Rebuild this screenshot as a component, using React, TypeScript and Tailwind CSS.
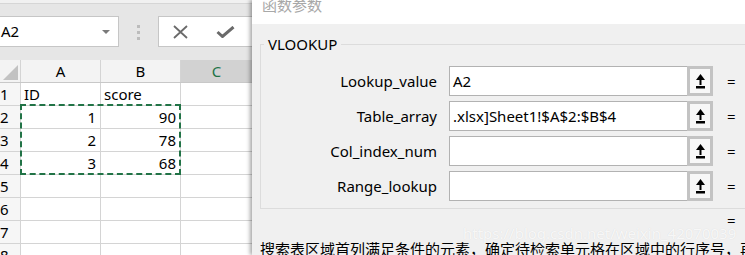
import React from "react";

const rows = [
  ["1", "ID", "score"],
  ["2", "1", "90"],
  ["3", "2", "78"],
  ["4", "3", "68"],
  ["5", "", ""],
  ["6", "", ""],
  ["7", "", ""],
  ["8", "", ""],
];

const args = [
  { label: "Lookup_value", value: "A2" },
  { label: "Table_array", value: ".xlsx]Sheet1!$A$2:$B$4" },
  { label: "Col_index_num", value: "" },
  { label: "Range_lookup", value: "" },
];

function RefButton() {
  return (
    <div className="flex h-[30px] w-[26px] shrink-0 items-center justify-center border-[3px] border-[#c3c3c3] bg-[#f7f7f7]">
      <svg width="9" height="15" viewBox="0 0 9 15">
        <polygon points="4.5,0 0,6 9,6" fill="#000" />
        <rect x="3.5" y="5" width="2" height="6" fill="#000" />
        <rect x="0" y="12" width="9" height="2.5" fill="#000" />
      </svg>
    </div>
  );
}

function Sheet() {
  return (
    <div className="flex w-[252px] shrink-0 flex-col bg-white">
      <div className="h-[4px] shrink-0 border-b border-[#d6d6d6] bg-[#f1f1f1]" />
      <div className="flex h-[56px] shrink-0 items-start bg-[#e6e6e6] pt-[12px]">
        <div className="flex h-[31px] w-[119px] items-center justify-between border border-l-0 border-[#c6c6c6] bg-white pl-[1px] pr-[8px] text-[15px] text-black">
          <span>A2</span>
          <svg width="8" height="4" viewBox="0 0 8 4">
            <polygon points="0,0 8,0 4,4" fill="#7a7a7a" />
          </svg>
        </div>
        <div className="flex w-[39px] flex-col items-center gap-[3px] pt-[9px]">
          <span className="h-[3px] w-[3px] bg-[#bcbcbc]" />
          <span className="h-[3px] w-[3px] bg-[#bcbcbc]" />
          <span className="h-[3px] w-[3px] bg-[#bcbcbc]" />
        </div>
        <div className="flex h-[31px] flex-1 items-center gap-[28px] border border-r-0 border-[#c6c6c6] bg-white pl-[14px]">
          <svg width="15" height="14" viewBox="0 0 15 14">
            <path d="M1 1 L14 13 M14 1 L1 13" stroke="#6a6a6a" strokeWidth="1.8" fill="none" />
          </svg>
          <svg width="19" height="12" viewBox="0 0 19 12">
            <path d="M1.5 6 L6.5 10.5 L17.5 1" stroke="#6a6a6a" strokeWidth="3" fill="none" />
          </svg>
        </div>
      </div>
      <div className="relative flex shrink-0 flex-col text-[15px] text-black">
        <div className="flex h-[23px] shrink-0 border-b border-[#c8c8c8] bg-[#f3f3f3]">
          <div className="flex w-[21px] items-end justify-end border-r border-[#d4d4d4] pb-[2px] pr-[2px]">
            <svg width="15" height="15" viewBox="0 0 15 15">
              <polygon points="0,15 15,0 15,15" fill="#c2c2c2" />
            </svg>
          </div>
          <div className="flex w-[80px] items-center justify-center border-r border-[#d4d4d4]">A</div>
          <div className="flex w-[80px] items-center justify-center border-r border-[#d4d4d4]">B</div>
          <div className="flex flex-1 items-center justify-center bg-[#d2d2d2] text-[#217346]">C</div>
        </div>
        {rows.map((r) => (
          <div key={r[0]} className="flex h-[23px] shrink-0 border-b border-[#d4d4d4]">
            <div className="flex w-[21px] items-center border-r border-[#d4d4d4] bg-[#f6f6f6] leading-none">
              {r[0]}
            </div>
            <div
              className={
                r[0] === "1"
                  ? "flex w-[80px] items-center border-r border-[#d4d4d4] pl-[3px]"
                  : "flex w-[80px] items-center justify-end border-r border-[#d4d4d4] pr-[4px]"
              }
            >
              {r[1]}
            </div>
            <div
              className={
                r[0] === "1"
                  ? "flex w-[80px] items-center border-r border-[#d4d4d4] pl-[3px]"
                  : "flex w-[80px] items-center justify-end border-r border-[#d4d4d4] pr-[4px]"
              }
            >
              {r[2]}
            </div>
            <div className="flex-1" />
          </div>
        ))}
        <div className="absolute left-[20px] top-[44px] h-[71px] w-[161px] border-2 border-dashed border-[#217346]" />
      </div>
    </div>
  );
}

function Dialog() {
  return (
    <div className="relative z-10 flex min-w-0 flex-1 flex-col overflow-hidden bg-[#f0f0f0] shadow-[-2px_0_4px_rgba(0,0,0,0.35)]">
      <div className="h-[24px] shrink-0 overflow-hidden bg-white pl-[10px]">
        <div className="-mt-[5px] text-[15px] leading-[20px] text-[#a8a8a8]">函数参数</div>
      </div>
      <div className="flex flex-col pt-[11px]">
        <fieldset className="ml-[8px] w-[500px] shrink-0 border border-[#dcdcdc] px-0 pb-[7px] pt-[13px]">
          <legend className="ml-[3px] px-[4px] text-[15px] leading-[18px] text-black">VLOOKUP</legend>
          <div className="flex flex-col gap-[5px]">
            {args.map((a) => (
              <div key={a.label} className="flex h-[30px] items-center">
                <div className="w-[176px] shrink-0 text-right text-[15px] text-black">{a.label}</div>
                <div className="ml-[12px] flex h-[30px] w-[238px] shrink-0 items-center border border-r-0 border-[#b2b2b2] bg-white pl-[3px] text-[15px] text-black">
                  {a.value}
                </div>
                <RefButton />
                <div className="ml-[14px] text-[15px] text-black">=</div>
              </div>
            ))}
          </div>
        </fieldset>
        <div className="mt-[1px] h-[20px] shrink-0 pl-[475px] text-[15px] leading-[20px] text-black">=</div>
        <div className="mt-[9px] shrink-0 whitespace-nowrap pl-[8px] text-[15px] leading-[20px] text-black">
          搜索表区域首列满足条件的元素，确定待检索单元格在区域中的行序号，再进一步返回选定单元格的值
        </div>
      </div>
      <div className="absolute left-[211px] top-[223px] whitespace-nowrap text-[15px] leading-[20px] text-white/80 [text-shadow:0_0_1px_rgba(0,0,0,0.12)]">
        https://blog.csdn.net/weixin_42070039
      </div>
    </div>
  );
}

export default function App() {
  return (
    <div className="flex h-[255px] w-[745px] overflow-hidden bg-white font-['Noto_Sans','Noto_Sans_CJK_SC',sans-serif]">
      <Sheet />
      <Dialog />
    </div>
  );
}
